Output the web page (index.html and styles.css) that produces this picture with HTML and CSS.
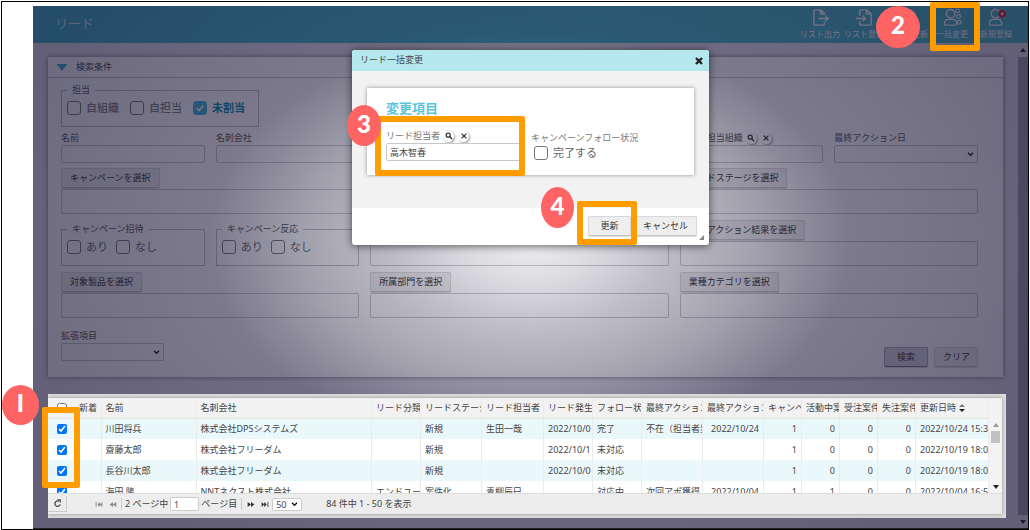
FILE: index.html
```html
<!DOCTYPE html>
<html lang="ja">
<head>
<meta charset="utf-8">
<title>リード</title>
<link rel="stylesheet" href="styles.css">
</head>
<body>
<div class="frame">
<div class="app">
  <header class="topbar">
    <h1 class="title">リード</h1>
    <nav class="actions">
      <button class="action" type="button">
        <svg viewBox="0 0 20 20"><path d="M14 7V5.500L10.500 2H4Q3 2 3 3V17Q3 18 4 18H13Q14 18 14 17V14.500M10 2V6H14M8 11H18M15 8L18 11L15 14"/></svg>
        <span>リスト出力</span></button>
      <button class="action" type="button">
        <svg viewBox="0 0 20 20"><path d="M5 8V3Q5 2 6 2H12.500L17 6V17Q17 18 16 18H6Q5 18 5 17V14M12 2V6H17M1 11H11M8 8L11 11L8 14"/></svg>
        <span>リスト登録</span></button>
      <button class="action" type="button">
        <svg viewBox="0 0 20 20"><path d="M5 8V3Q5 2 6 2H12.500L17 6V17Q17 18 16 18H6Q5 18 5 17V14M12 2V6H17"/></svg>
        <span>リスト更新</span></button>
      <button class="action" type="button">
        <svg viewBox="0 0 20 20"><circle cx="8" cy="6" r="4.500"/><path d="M1.500 17Q1.500 12 5.500 12H10.500Q14.500 12 14.500 17Q14.500 18 13.500 18H2.500Q1.500 18 1.500 17Z"/><g class="thin"><circle cx="15.500" cy="3" r="2"/><circle cx="16.500" cy="9" r="2"/><circle cx="17" cy="15" r="2"/></g></svg>
        <span>一括変更</span></button>
      <button class="action" type="button">
        <svg viewBox="0 0 20 20"><circle cx="9" cy="6" r="4.500"/><path d="M2.500 17Q2.500 12 6.500 12H11.500Q15.500 12 15.500 17Q15.500 18 14.500 18H3.500Q2.500 18 2.500 17Z"/><circle class="plus-disc" cx="16" cy="6" r="4"/><path d="M16 4.500V7.500M14.500 6H17.500"/></svg>
        <span>新規登録</span></button>
    </nav>
  </header>

  <div class="main">
    <div class="content">
      <section class="search">
        <h2 class="search-head"><svg class="tri" viewBox="0 0 12 8"><path d="M0 0H12L6 8Z"/></svg>検索条件</h2>
        <div class="search-body">
          <fieldset class="group group-wide">
            <legend>担当</legend>
            <label class="check"><input type="checkbox">自組織</label>
            <label class="check"><input type="checkbox">自担当</label>
            <label class="check check-on"><input type="checkbox" checked>未割当</label>
          </fieldset>

          <div class="grid row-fields">
            <div class="field"><label for="name">名前</label><input id="name" type="text"></div>
            <div class="field"><label for="company">名刺会社</label><input id="company" type="text"></div>
            <div class="field col-5"><div class="label-line"><label for="org">リード担当組織</label>
              <button class="mini" type="button" aria-label="search"><svg viewBox="0 0 10 10"><circle cx="4" cy="4" r="2.500"/><path d="M6 6L9 9"/></svg></button>
              <button class="mini" type="button" aria-label="clear"><svg viewBox="0 0 10 10"><path d="M2 2L8 8M8 2L2 8"/></svg></button></div>
              <input id="org" type="text"></div>
            <div class="field"><label for="last">最終アクション日</label><select id="last"><option></option></select></div>
          </div>

          <div class="grid">
            <div class="picker"><button class="btn" type="button">キャンペーンを選択</button><div class="area"></div></div>
            <div class="picker picker-bare"><div class="area"></div></div>
            <div class="picker"><button class="btn" type="button">リードステージを選択</button><div class="area"></div></div>
          </div>

          <div class="grid">
            <fieldset class="group">
              <legend>キャンペーン招待</legend>
              <label class="check"><input type="checkbox">あり</label>
              <label class="check"><input type="checkbox">なし</label>
            </fieldset>
            <fieldset class="group">
              <legend>キャンペーン反応</legend>
              <label class="check"><input type="checkbox">あり</label>
              <label class="check"><input type="checkbox">なし</label>
            </fieldset>
            <div class="picker picker-bare"><div class="area"></div></div>
            <div class="picker"><button class="btn" type="button">最終アクション結果を選択</button><div class="area"></div></div>
          </div>

          <div class="grid">
            <div class="picker"><button class="btn" type="button">対象製品を選択</button><div class="area"></div></div>
            <div class="picker"><button class="btn" type="button">所属部門を選択</button><div class="area"></div></div>
            <div class="picker"><button class="btn" type="button">業種カテゴリを選択</button><div class="area"></div></div>
          </div>

          <div class="search-foot">
            <div class="field field-ext"><label for="ext">拡張項目</label><select id="ext"><option></option></select></div>
            <div class="foot-buttons">
              <button class="btn btn-strong" type="button">検索</button>
              <button class="btn btn-foot" type="button">クリア</button>
            </div>
          </div>
        </div>
      </section>

      <section class="results">
        <div class="results-inner">
          <div class="viewport">
            <table class="leads">
              <colgroup><col class="w-check"><col class="w-new"><col class="w-name"><col><col class="w-49"><col class="w-61"><col class="w-62"><col class="w-49"><col class="w-49"><col class="w-61"><col class="w-61"><col class="w-38"><col class="w-38"><col class="w-38"><col class="w-38"><col class="w-date"></colgroup>
              <thead><tr>
                <th><input type="checkbox" aria-label="all"></th><th class="th-new">新着</th><th>名前</th><th>名刺会社</th><th>リード分類</th><th>リードステージ</th><th>リード担当者</th><th>リード発生</th><th>フォロー状</th><th>最終アクション</th><th>最終アクション</th><th>キャンペ</th><th>活動中案</th><th>受注案件</th><th>失注案件</th><th>更新日時<svg class="sort" viewBox="0 0 6 10"><path class="sort-up" d="M0 4L3 1L6 4Z"/><path d="M0 6H6L3 9Z"/></svg></th>
              </tr></thead>
              <tbody>
                <tr><td><input type="checkbox" checked aria-label="川田将兵"></td><td></td><td>川田将兵</td><td>株式会社DPSシステムズ</td><td></td><td>新規</td><td>生田一哉</td><td>2022/10/0</td><td>完了</td><td>不在（担当者異</td><td class="num">2022/10/24</td><td class="num">1</td><td class="num">0</td><td class="num">0</td><td class="num">0</td><td>2022/10/24 15:3</td></tr>
                <tr><td><input type="checkbox" checked aria-label="齋藤太郎"></td><td></td><td>齋藤太郎</td><td>株式会社フリーダム</td><td></td><td>新規</td><td></td><td>2022/10/1</td><td>未対応</td><td></td><td></td><td class="num">1</td><td class="num">0</td><td class="num">0</td><td class="num">0</td><td>2022/10/19 18:0</td></tr>
                <tr><td><input type="checkbox" checked aria-label="長谷川太郎"></td><td></td><td>長谷川太郎</td><td>株式会社フリーダム</td><td></td><td>新規</td><td></td><td>2022/10/0</td><td>未対応</td><td></td><td></td><td class="num">1</td><td class="num">0</td><td class="num">0</td><td class="num">0</td><td>2022/10/19 18:0</td></tr>
                <tr><td><input type="checkbox" checked aria-label="海田隆"></td><td></td><td>海田 隆</td><td>NNTネクスト株式会社</td><td>エンドユーザ</td><td>案件化</td><td>青柳辰巳</td><td></td><td>対応中</td><td>次回アポ獲得</td><td class="num">2022/10/04</td><td class="num">1</td><td class="num">1</td><td class="num">0</td><td class="num">0</td><td>2022/10/04 16:5</td></tr>
              </tbody>
            </table>
            <div class="vbar">
              <svg class="arrow arrow-dim" viewBox="0 0 6 4"><path d="M0 4L3 0L6 4Z"/></svg>
              <div class="vthumb"></div>
              <svg class="arrow arrow-end" viewBox="0 0 6 4"><path d="M0 0H6L3 4Z"/></svg>
            </div>
          </div>
          <div class="pager">
            <button class="reload" type="button" aria-label="reload"><svg viewBox="0 0 10 10"><path d="M8 6A3 3 0 1 1 6.500 2.500M5 1H8V4"/></svg></button>
            <div class="pager-nav">
              <button class="nav nav-dim" type="button" aria-label="first"><svg viewBox="0 0 8 6"><path d="M0 0H1V6H0ZM5 0V6L2 3ZM8 0V6L5 3Z"/></svg></button>
              <button class="nav nav-dim" type="button" aria-label="previous"><svg viewBox="0 0 8 6"><path d="M4 0V6L0 3ZM8 0V6L4 3Z"/></svg></button>
              <label class="page-label" for="page">2 ページ中</label>
              <input id="page" class="page" type="text" value="1">
              <span class="page-unit">ページ目</span>
              <button class="nav" type="button" aria-label="next"><svg viewBox="0 0 8 6"><path d="M0 0V6L4 3ZM4 0V6L8 3Z"/></svg></button>
              <button class="nav" type="button" aria-label="last"><svg viewBox="0 0 8 6"><path d="M0 0V6L3 3ZM3 0V6L6 3ZM7 0H8V6H7Z"/></svg></button>
              <select class="size" aria-label="rows"><option>50</option></select>
            </div>
            <span class="total">84 件中 1 - 50 を表示</span>
          </div>
        </div>
      </section>
    </div>
    <div class="page-bar">
      <svg class="arrow" viewBox="0 0 6 4"><path d="M0 4L3 0L6 4Z"/></svg>
      <div class="page-thumb"></div>
      <svg class="arrow" viewBox="0 0 6 4"><path d="M0 0H6L3 4Z"/></svg>
    </div>
  </div>

  <div class="shade"></div>

  <div class="dialog" role="dialog" aria-labelledby="dlg-title">
    <div class="dialog-head"><span id="dlg-title">リード一括変更</span>
      <button class="close" type="button" aria-label="close"><svg viewBox="0 0 8 8"><path d="M1 1L7 7M7 1L1 7"/></svg></button></div>
    <div class="dialog-body">
      <div class="card">
        <h3>変更項目</h3>
        <div class="card-cols">
          <div class="field owner"><div class="label-line"><label for="owner">リード担当者</label>
            <button class="mini" type="button" aria-label="search"><svg viewBox="0 0 10 10"><circle cx="4" cy="4" r="2.500"/><path d="M6 6L9 9"/></svg></button>
            <button class="mini" type="button" aria-label="clear"><svg viewBox="0 0 10 10"><path d="M2 2L8 8M8 2L2 8"/></svg></button></div>
            <input id="owner" type="text" value="高木智春"></div>
          <div class="follow"><span>キャンペーンフォロー状況</span>
            <label class="check"><input type="checkbox">完了する</label></div>
        </div>
      </div>
    </div>
    <div class="dialog-foot">
      <button class="btn btn-save" type="button">更新</button>
      <button class="btn" type="button">キャンセル</button>
    </div>
    <svg class="grip" viewBox="0 0 6 6"><path d="M6 0V6H0Z"/></svg>
    <div class="mark mark-3"></div><div class="dot dot-3">3</div>
    <div class="mark mark-4"></div><div class="dot dot-4">4</div>
  </div>
</div>
<div class="mark mark-1"></div><div class="dot dot-1">I</div>
<div class="mark mark-2"></div><div class="dot dot-2">2</div>
</div>
</body>
</html>
```
FILE: styles.css
```css
* { box-sizing: border-box; }

body {
  margin: 1px;
  background: #fff;
  color: #444;
  font: 9px/12px "Noto Sans", "Noto Sans CJK JP", sans-serif;
}

button, input, select {
  margin: 0;
  padding: 0;
  color: inherit;
  font: inherit;
}

button { border: 0; background: none; white-space: nowrap; }
h1, h2, h3 { margin: 0; font-weight: 400; }
svg { display: block; }

.frame {
  position: relative;
  display: flex;
  min-height: calc(100vh - 2px);
  padding: 4px 0 0 31px;
  border: 1px solid #000;
}

.app {
  position: relative;
  display: flex;
  flex: 1;
  flex-direction: column;
  min-width: 0;
  border-bottom: 1px solid #222;
  background: #e4e1ec;
}

/* top bar */
.topbar {
  display: flex;
  align-items: center;
  justify-content: space-between;
  height: 37px;
  padding: 0 10px 0 22px;
  background: linear-gradient(90deg, #3cb0c8, #48b8c4);
  color: #fff;
}
.title { font-size: 13px; line-height: 18px; font-weight: 300; padding-bottom: 4px; }
.actions { display: flex; padding-bottom: 2px; }
.action {
  display: flex;
  flex-direction: column;
  align-items: center;
  gap: 1px;
  width: 44px;
  font-size: 8px;
  line-height: 12px;
}
.action svg { width: 19px; height: 19px; fill: none; stroke: #fff; stroke-width: 1.500; }
.action .thin { stroke-width: 1.200; }
.action .plus-disc { fill: #f0102c; stroke: none; }

/* page columns */
.main { display: flex; flex: 1; }
.content { flex: 1; min-width: 0; padding: 14px 12px 10px 15px; }
.page-bar {
  display: flex;
  flex-direction: column;
  align-items: center;
  width: 10px;
  padding: 5px 0 4px;
  background: #e4e1ec;
}
.page-thumb { flex: 1; align-self: stretch; margin: 5px 0; background: #a09dac; }
.arrow { width: 6px; height: 4px; fill: #222; }

/* search panel */
.search {
  margin-right: 3px;
  padding-bottom: 10px;
  background: #fff;
  box-shadow: 0 0 5px rgba(0, 0, 0, .5);
}
.search-head {
  display: flex;
  align-items: center;
  gap: 8px;
  height: 21px;
  padding-left: 8px;
  border-bottom: 1px solid #c8c8cc;
  font-size: 9px;
}
.tri { width: 12px; height: 7px; fill: #30b4cc; }
.search-body { padding: 6px 25px 0 13px; }

.grid {
  display: grid;
  grid-template-columns: repeat(6, minmax(0, 1fr));
  column-gap: 11px;
  margin-bottom: 6px;
}
.row-fields { margin: 5px 0; }
.col-5 { grid-column: 5; }

.field { display: flex; flex-direction: column; }
.field label, .label-line { line-height: 12px; }
.field > label, .field > .label-line { margin-bottom: 1px; color: #555; }
.label-line { display: flex; align-items: center; height: 12px; gap: 4px; white-space: nowrap; }
.label-line .mini:first-of-type { margin-left: -1px; }
.field input, .field select {
  width: 100%;
  height: 18px;
  padding: 0 3px;
  border: 1px solid #c8c8cc;
  border-radius: 2px;
  background-color: #fff;
}
.field select, .size {
  appearance: none;
  background: #fff url("data:image/svg+xml,%3Csvg xmlns='http://www.w3.org/2000/svg' viewBox='0 0 8 6'%3E%3Cpath d='M1 1L4 4L7 1' fill='none' stroke='%23111' stroke-width='1.6'/%3E%3C/svg%3E") right 3px center / 7px 5px no-repeat;
}

.mini {
  width: 11px;
  height: 11px;
  border-radius: 50%;
  background: #fff;
  box-shadow: 1px 1px 2px rgba(0, 0, 0, .4);
}
.mini svg { width: 8px; height: 8px; margin: 0 auto; fill: none; stroke: #333; stroke-width: 1.600; }

.group {
  display: flex;
  min-width: 0;
  margin: 3px 0 0;
  padding: 3px 5px 9px;
  border: 1px solid #c0c0c4;
  gap: 8px;
}
.group-wide { width: 198px; margin-top: 0; gap: 11px; }
.group legend { margin-left: 0; padding: 0 5px; line-height: 12px; color: #555; }
.check {
  display: flex;
  align-items: center;
  gap: 5px;
  font-size: 11px;
  line-height: 18px;
  color: #666;
  white-space: nowrap;
}
.check input {
  appearance: none;
  width: 14px;
  height: 14px;
  border: 1px solid #777;
  border-radius: 3px;
  background: #fff;
}
.check-on { color: #0089ae; font-weight: 700; }
.check-on input {
  border-color: #3fb8d4;
  background: #3fb8d4 url("data:image/svg+xml,%3Csvg xmlns='http://www.w3.org/2000/svg' viewBox='0 0 12 12'%3E%3Cpath d='M2 6L5 9L10 3' fill='none' stroke='%23fff' stroke-width='2'/%3E%3C/svg%3E") center / 10px 10px no-repeat;
}

.picker { grid-column: span 2; display: flex; flex-direction: column; align-items: flex-start; gap: 1px; }
.picker-bare { padding-top: 21px; }
.area { width: 100%; height: 25px; border: 1px solid #c8c8cc; border-radius: 2px; }

.btn {
  height: 20px;
  padding: 0 8px;
  border: 1px solid #d8d8dc;
  border-bottom-color: #c4c4c8;
  border-radius: 2px;
  background: #eee;
  box-shadow: 0 1px 1px rgba(0, 0, 0, .15);
  color: #333;
}
.search-foot { display: flex; justify-content: space-between; align-items: flex-end; padding-top: 6px; }
.field-ext { width: 103px; margin-bottom: 6px; }
.foot-buttons { display: flex; gap: 6px; }
.btn-strong, .btn-foot { width: 44px; }
.btn-strong { background: #d4d4dc; border-color: #aaa; border-bottom-color: #777; }

/* result list */
.results {
  position: relative;
  z-index: 2;
  margin-top: 17px;
  padding: 4px 4px 4px 0;
  background: #dedede;
}
.results-inner { background: #ededed; box-shadow: 0 0 4px rgba(0, 0, 0, .35); clip-path: inset(-4px -4px -4px 0); }
.viewport { display: flex; height: 95px; overflow: hidden; background: #f2f2f2; }
.leads { flex: 1; width: 0; border-collapse: collapse; table-layout: fixed; background: #fff; }
.leads th, .leads td {
  height: 21px;
  padding: 0 0 0 4px;
  overflow: hidden;
  border-right: 1px solid #ebebeb;
  font-weight: 400;
  text-align: left;
  white-space: nowrap;
}
.leads th { height: 20px; background: #f2f2f2; border-bottom: 1px solid #e4e4e4; }
.leads td { line-height: 12px; }
.leads tbody tr:nth-child(odd) { background: #ebf8fb; }
.leads th:first-child, .leads td:first-child { padding: 0; border-right: 0; }
.leads .num { padding-right: 4px; text-align: right; }
.leads input { display: block; width: 10px; height: 10px; margin: 0 auto; }
.w-check { width: 27px; }
.w-new { width: 26px; }
.w-name { width: 95px; }
.w-49 { width: 49px; }
.w-61 { width: 61px; }
.w-62 { width: 62px; }
.w-38 { width: 38px; }
.w-date { width: 73px; }
.sort { display: inline-block; width: 6px; height: 10px; margin-left: 3px; vertical-align: middle; fill: #222; }
.sort-up { fill: #777; }
.vbar {
  display: flex;
  flex-direction: column;
  align-items: center;
  width: 13px;
  margin-top: 21px;
  padding: 4px 0;
  background: #f4f4f4;
}
.vthumb { width: 9px; height: 12px; margin-top: 4px; background: #c1c1c1; }
.arrow-dim { fill: #999; }
.arrow-end { margin-top: auto; }

.pager { display: flex; align-items: center; height: 21px; border-top: 1px solid #ddd; }
.reload { width: 19px; height: 16px; padding-left: 5px; border-right: 1px solid #ccc; border-bottom: 1px solid #ccc; }
.reload svg { width: 9px; height: 9px; fill: none; stroke: #444; stroke-width: 1.400; }
.pager-nav { display: flex; align-items: center; margin-left: 25px; }
.nav { padding: 4px 3px; }
.nav svg { width: 8px; height: 5px; fill: #333; }
.nav-dim svg { fill: #888; }
.page-label { margin-left: 1px; padding-left: 3px; border-left: 1px solid #ccc; }
.page { width: 29px; height: 14px; margin: 0 2px; padding: 0 3px; border: 1px solid #ccc; border-radius: 2px; background: #fff; font-size: 8px; }
.page-unit { margin-right: 2px; padding-right: 4px; border-right: 1px solid #ccc; }
.size { width: 30px; height: 13px; padding: 0 3px; border: 1px solid #ccc; border-radius: 2px; }
.total { margin-left: 24px; }

/* dimming layer */
.shade {
  position: absolute;
  inset: 0;
  z-index: 1;
  background: radial-gradient(ellipse 320px 210px at 50% 45%,
    rgba(24, 20, 52, .08) 0%, rgba(24, 20, 52, .14) 18%, rgba(24, 20, 52, .28) 42%,
    rgba(24, 20, 52, .4) 70%, rgba(24, 20, 52, .57) 100%, rgba(24, 20, 52, .63) 170%);
}

/* dialog */
.dialog {
  position: absolute;
  z-index: 3;
  top: 44px;
  left: 0;
  right: 0;
  width: 357px;
  margin: 0 auto;
  border-radius: 3px;
  background: #fff;
  box-shadow: 0 1px 8px rgba(0, 0, 0, .6);
}
.dialog-head {
  display: flex;
  align-items: center;
  justify-content: space-between;
  height: 21px;
  padding: 0 6px 0 8px;
  border-radius: 3px 3px 0 0;
  background: #b4e7ee;
}
.dialog-head span { padding-bottom: 1px; }
.close svg { width: 8px; height: 8px; stroke: #222; stroke-width: 2.400; }
.dialog-body { padding: 17px 15px 33px; background: #f2f2f2; }
.card { height: 87px; padding: 11px 18px 0 19px; background: #fff; box-shadow: 0 0 4px rgba(0, 0, 0, .4); }
.card h3 { font-size: 13px; line-height: 18px; font-weight: 700; color: #5bc3d8; }
.card-cols { display: flex; gap: 9px; padding-top: 13px; }
.owner { width: 136px; }
.owner > .label-line { color: #777; }
.follow { padding-top: 2px; color: #777; }
.follow .check { padding-left: 3px; }
.dialog-foot { display: flex; justify-content: flex-end; gap: 3px; padding: 8px 12px 9px; }
.btn-save { width: 43px; }
.grip { position: absolute; right: 5px; bottom: 5px; width: 5px; height: 5px; fill: #888; }

/* callouts */
.mark { position: absolute; z-index: 4; border: 6px solid #ff9d00; border-radius: 2px; }
.dot {
  position: absolute;
  z-index: 5;
  display: flex;
  align-items: center;
  justify-content: center;
  padding-bottom: 4px;
  border-radius: 50%;
  background: #ff6464;
  color: #fff;
  font: 900 24px/24px Lato, sans-serif;
}
.mark-1 { left: 40px; top: 405px; width: 38px; height: 81px; }
.dot-1 { left: 0; top: 383px; width: 37px; height: 40px; }
.mark-2 { right: 48px; top: 0; width: 50px; height: 49px; }
.dot-2 { right: 108px; top: 4px; width: 44px; height: 42px; }
.mark-3 { left: 23px; top: 66px; width: 150px; height: 60px; }
.dot-3 { left: -5px; top: 55px; width: 34px; height: 41px; }
.mark-4 { right: 72px; top: 151px; width: 60px; height: 44px; }
.dot-4 { right: 135px; top: 137px; width: 33px; height: 41px; }
```
